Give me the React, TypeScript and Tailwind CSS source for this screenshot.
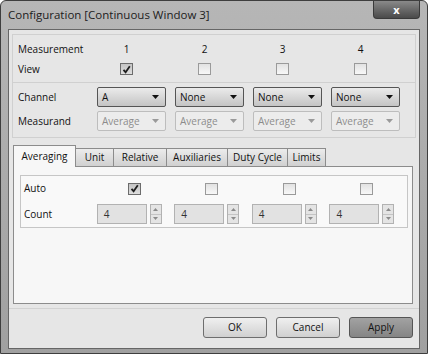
import React from "react";

const font = "font-['Open_Sans','Noto_Sans',sans-serif]";
const cols = [0, 1, 2, 3];

const CheckBox = ({ checked }: { checked?: boolean }) => (
  <div
    className={`w-[13px] h-[12px] border flex items-center justify-center ${
      checked
        ? "border-[#6c6c6c] bg-gradient-to-b from-[#c4c4c4] to-[#dedede]"
        : "border-[#9a9a9a] bg-gradient-to-b from-[#e2e2e2] to-[#f8f8f8]"
    }`}
  >
    {checked && (
      <svg width="9" height="9" viewBox="0 0 9 9">
        <path d="M1.5 4.8 L3.6 7.2 L7.8 1.2" fill="none" stroke="#1e1e1e" strokeWidth="1.8" />
      </svg>
    )}
  </div>
);

const Select = ({ value, disabled }: { value: string; disabled?: boolean }) => (
  <div
    className={`w-[69px] h-[20px] rounded-[2px] border flex items-center justify-between pl-[4px] pr-[6px] text-[10px] ${
      disabled
        ? "border-[#bdbdbd] bg-[#ececec] text-[#8c8c8c]"
        : "border-[#555] bg-gradient-to-b from-[#ebebeb] to-[#c4c4c4] text-[#111]"
    }`}
  >
    <span>{value}</span>
    <svg width="7" height="4" viewBox="0 0 7 4">
      <path d="M0 0 H7 L3.5 4 Z" fill={disabled ? "#9a9a9a" : "#111"} />
    </svg>
  </div>
);

const Spin = () => (
  <div className="flex items-center gap-[3px]">
    <div className="w-[50px] h-[20px] border border-[#b2b2b2] bg-[#e2e2e2] flex items-center pl-[6px] text-[10px] text-[#333]">
      4
    </div>
    <div className="w-[12px] h-[20px] flex flex-col border border-[#b2b2b2] bg-[#e4e4e4]">
      <div className="flex-1 flex items-center justify-center border-b border-[#c4c4c4]">
        <svg width="5" height="3" viewBox="0 0 5 3">
          <path d="M0 3 H5 L2.5 0 Z" fill="#8a8a8a" />
        </svg>
      </div>
      <div className="flex-1 flex items-center justify-center">
        <svg width="5" height="3" viewBox="0 0 5 3">
          <path d="M0 0 H5 L2.5 3 Z" fill="#8a8a8a" />
        </svg>
      </div>
    </div>
  </div>
);

const tabs = [
  { name: "Unit", w: "w-[38px]" },
  { name: "Relative", w: "w-[53px]" },
  { name: "Auxiliaries", w: "w-[61px]" },
  { name: "Duty Cycle", w: "w-[60px]" },
  { name: "Limits", w: "w-[38px]" },
];

const Button = ({ label, active }: { label: string; active?: boolean }) => (
  <div
    className={`w-[64px] h-[21px] rounded-[3px] border flex items-center justify-center text-[10px] text-[#111] ${
      active
        ? "border-[#555] bg-gradient-to-b from-[#a2a2a2] to-[#858585]"
        : "border-[#6e6e6e] bg-gradient-to-b from-[#f0f0f0] to-[#d0d0d0]"
    }`}
  >
    {label}
  </div>
);

export default function App() {
  return (
    <div className={`w-[430px] h-[356px] bg-white ${font}`}>
      <div className="w-[428px] h-[354px] rounded-t-[6px] border border-[#3e3e3e] bg-gradient-to-b from-[#b6b6b6] to-[#a0a0a0] flex flex-col">
        {/* title bar */}
        <div className="h-[28px] flex items-start justify-between pl-[7px] pr-[7px]">
          <span className="mt-[8px] text-[11.5px] text-[#1c1c1c] leading-none">
            Configuration [Continuous Window 3]
          </span>
          <div className="w-[47px] h-[18px] rounded-b-[4px] border border-t-0 border-[#3a3a3a] bg-gradient-to-b from-[#8a8a8a] to-[#4a4a4a] flex items-center justify-center text-white text-[11px] font-bold leading-none">
            x
          </div>
        </div>

        {/* client area */}
        <div className="mx-[7px] flex-1 border border-[#666] bg-[#e6e6e6] flex flex-col text-[10px] text-[#111]">
          {/* header section */}
          <div className="mt-[4px] mx-[3px] border border-[#d0d0d0] pl-[5px]">
            <div className="h-[14px] mt-[7px] flex items-center">
              <div className="w-[79px]">Measurement</div>
              {cols.map((c) => (
                <div key={c} className="w-[78px] flex">
                  <div className="ml-[23px] w-[13px] text-center">{c + 1}</div>
                </div>
              ))}
            </div>
            <div className="h-[14px] mt-[6px] mb-[6px] flex items-center">
              <div className="w-[79px]">View</div>
              {cols.map((c) => (
                <div key={c} className="w-[78px] flex">
                  <div className="ml-[23px]">
                    <CheckBox checked={c === 0} />
                  </div>
                </div>
              ))}
            </div>
          </div>
          <div className="mx-[3px] border border-t-0 border-[#d0d0d0] pl-[5px] pt-[4px] pb-[6px] flex flex-col gap-[4px]">
            <div className="h-[20px] flex items-center">
              <div className="w-[79px]">Channel</div>
              {["A", "None", "None", "None"].map((v, i) => (
                <div key={i} className="w-[78px]">
                  <Select value={v} />
                </div>
              ))}
            </div>
            <div className="h-[20px] flex items-center">
              <div className="w-[79px]">Measurand</div>
              {cols.map((c) => (
                <div key={c} className="w-[78px]">
                  <Select value="Average" disabled />
                </div>
              ))}
            </div>
          </div>

          {/* tabs */}
          <div className="mt-[6px] ml-[4px] flex items-end h-[22px]">
            <div className="w-[63px] h-[22px] border border-b-0 border-[#8c8c8c] bg-[#f7f7f7] flex items-center justify-center relative z-10 -mb-px pb-[1px]">
              Averaging
            </div>
            {tabs.map((t) => (
              <div
                key={t.name}
                className={`${t.w} h-[18px] border border-l-0 border-b-0 border-[#8c8c8c] bg-gradient-to-b from-[#ececec] to-[#d0d0d0] flex items-center justify-center`}
              >
                {t.name}
              </div>
            ))}
          </div>
          <div className="ml-[4px] mr-[6px] h-[138px] border border-[#8c8c8c] bg-[#f7f7f7] pt-[8px] pl-[6px] pr-[4px]">
            <div className="border border-[#c6c6c6] bg-[#f9f9f9] pl-[3px] pt-[6px] pb-[3px] flex flex-col gap-[9px]">
              <div className="h-[13px] flex items-center">
                <div className="w-[73px]">Auto</div>
                {cols.map((c) => (
                  <div key={c} className="w-[78px] flex">
                    <div className="ml-[31px]">
                      <CheckBox checked={c === 0} />
                    </div>
                  </div>
                ))}
              </div>
              <div className="h-[20px] flex items-center">
                <div className="w-[73px]">Count</div>
                {cols.map((c) => (
                  <div key={c} className="w-[78px]">
                    <Spin />
                  </div>
                ))}
              </div>
            </div>
          </div>

          {/* buttons */}
          <div className="mt-[4px] flex-1 border-t border-[#d2d2d2] flex items-start justify-end gap-[9px] pr-[6px] pt-[8px]">
            <Button label="OK" />
            <Button label="Cancel" />
            <Button label="Apply" active />
          </div>
        </div>
        <div className="h-[4px]" />
      </div>
    </div>
  );
}
